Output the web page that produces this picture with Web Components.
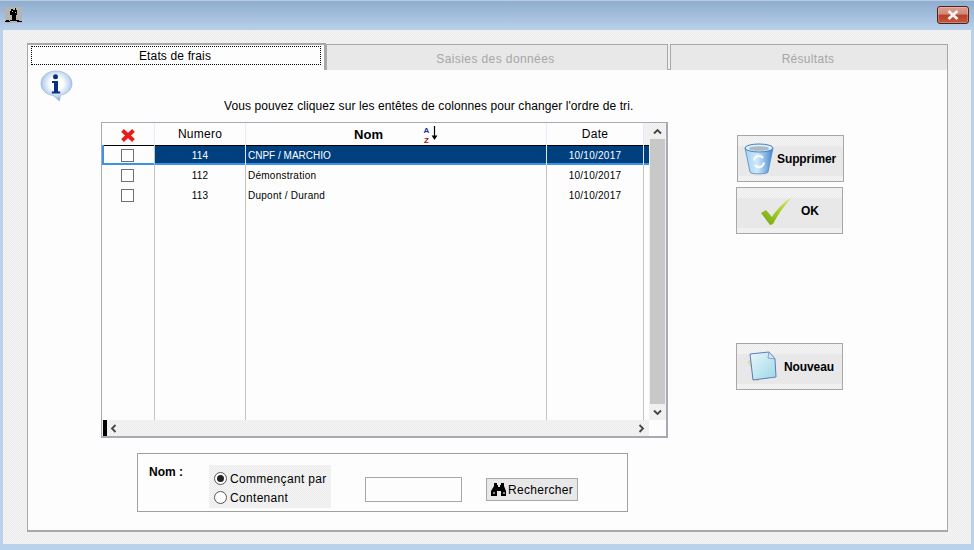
<!DOCTYPE html>
<html lang="fr">
<head>
<meta charset="utf-8">
<title>Etats de frais</title>
<style>
  html, body { margin: 0; padding: 0; height: 100%; overflow: hidden; }
  body { font-family: "Liberation Sans", Arial, sans-serif; font-size: 12px; color: #000; }
</style>
</head>
<body>

<app-window>
  <tab-panel>
    <panel-hint>Vous pouvez cliquez sur les entêtes de colonnes pour changer l'ordre de tri.</panel-hint>
    <div style="display:flex; margin-left:73px;">
      <data-list>
        <list-row selected num="114" name="CNPF / MARCHIO" date="10/10/2017"></list-row>
        <list-row num="112" name="Démonstration" date="10/10/2017"></list-row>
        <list-row num="113" name="Dupont / Durand" date="10/10/2017"></list-row>
      </data-list>
      <div style="display:flex; flex-direction:column; margin-left:68px; padding-top:13px;">
        <img-button icon="trash" style="margin-left:1px;" label="Supprimer" gap="3"></img-button>
        <img-button icon="check" style="margin-top:5px;" label="OK" gap="9" pad="24"></img-button>
        <img-button icon="doc" style="margin-top:109px;" label="Nouveau" gap="7" pad="11"></img-button>
      </div>
    </div>
    <search-box></search-box>
  </tab-panel>
</app-window>

<script>
const DITHER = 'repeating-conic-gradient(#f5f5f5 0 25%, #ebebeb 0 50%) 0 0 / 2px 2px';

class AppWindow extends HTMLElement {
  constructor() {
    super();
    this.attachShadow({ mode: 'open' }).innerHTML = `
      <style>
        :host { display: flex; flex-direction: column; width: 974px; height: 550px; background: #b9d1ea; box-sizing: border-box; }
        .bar { height: 30px; flex: none; display: flex; align-items: center; justify-content: space-between; padding: 0 5px 2px 5px;
               box-sizing: border-box; background: linear-gradient(#8fadcf, #b8d0ea); border-top: 1px solid #b9cbe0; }
        .close { width: 32px; height: 18px; box-sizing: border-box; border: 1px solid #4f1f1c; border-radius: 3px; display: flex; align-items: center; justify-content: center;
                 background: linear-gradient(#dd9c8c 0, #d08877 45%, #b93f26 50%, #c25a3e 100%); box-shadow: inset 0 0 0 1px rgba(255,255,255,.25); }
        .client { flex: none; width: 968px; height: 514px; margin-left: 3px; padding: 13px 0 0 24px; box-sizing: border-box; background: ${DITHER}; }
      </style>
      <div class="bar">
        <svg width="17" height="16" viewBox="0 0 17 16">
          <rect width="17" height="16" fill="#b4b4b4"/>
          <path d="M6 2h2v1h2v-2h1v2h1v5h-1v5h3v1H5v-1h2V8H5V4h1zM1 13h3v1h1v1H0v-1h1zM12 14h5v1h-5z" fill="#000"/>
          <path d="M7 4h1v1H7zM10 5h1v1h-1z" fill="#bbb"/>
        </svg>
        <div class="close">
          <svg width="14" height="10" viewBox="0 0 14 10"><path d="M2.500 1 11.500 9M11.500 1 2.500 9" stroke="#f2f2f2" stroke-width="2.800"/></svg>
        </div>
      </div>
      <div class="client"><slot></slot></div>`;
  }
}

class TabPanel extends HTMLElement {
  constructor() {
    super();
    this.attachShadow({ mode: 'open' }).innerHTML = `
      <style>
        :host { display: block; width: 921px; height: 489px; }
        .tabs { display: grid; grid-template-columns: 299px 342px 280px; height: 26px; }
        .tab { box-sizing: border-box; display: flex; align-items: center; justify-content: center; }
        .on { border: 1px solid #a8a8a8; border-bottom: 0; border-width: 2px 2px 0 1px; background: #fdfdfd; padding: 1px 3px 5px 3px; position: relative; z-index: 1; height: 27px; }
        .on span { flex: 1; height: 100%; display: flex; align-items: center; justify-content: center; border: 1px dotted #000; font-size: 12px; letter-spacing: .15px; padding-right: 2px; box-sizing: border-box; }
        .off { margin-top: 1px; border: 1px solid #a8a8a8; border-bottom: 0; background: #e8e8e8; color: #a6a6a6; padding-top: 2px; }
        .off.b { margin-left: 0; letter-spacing: .4px; padding-right: 3px; }
        .off.c { margin-left: 2px; letter-spacing: .3px; padding-right: 2px; }
        .body { box-sizing: border-box; height: 463px; border: 1px solid #a8a8a8; border-width: 1px 1px 2px 1px; background: #fdfdfd; }
      </style>
      <div class="tabs">
        <div class="tab on"><span>Etats de frais</span></div>
        <div class="tab off b">Saisies des données</div>
        <div class="tab off c">Résultats</div>
      </div>
      <div class="body"><slot></slot></div>`;
  }
}

class PanelHint extends HTMLElement {
  constructor() {
    super();
    this.attachShadow({ mode: 'open' }).innerHTML = `
      <style>
        :host { display: flex; height: 52px; }
        svg { margin: 0 0 0 12px; flex: none; }
        .t { margin: 28px 0 0 151px; white-space: nowrap; font-size: 12px; line-height: 16px; letter-spacing: .09px; }
      </style>
      <svg width="33" height="32" viewBox="0 0 33 32">
        <defs>
          <radialGradient id="bub" cx=".5" cy=".42" r=".62">
            <stop offset=".35" stop-color="#fdfeff"/><stop offset=".72" stop-color="#bcd3ef"/><stop offset="1" stop-color="#5f88c4"/>
          </radialGradient>
        </defs>
        <path d="M16 1C7 1 1 6.500 1 13.500 1 20 6 24.500 13 25.400L19.500 31 20.500 25.200C27 24 32 19.800 32 13.500 32 6.500 25 1 16 1Z" fill="url(#bub)" stroke="#9db7d8" stroke-width=".7"/>
        <circle cx="15.500" cy="6.800" r="2.500" fill="#0c2f86"/>
        <path d="M12 11h6v10.500h2.200v2h-8.400v-2H14v-8.500h-2z" fill="#0c2f86"/>
      </svg>
      <div class="t"><slot></slot></div>`;
  }
}

const COLS = 'grid-template-columns: 53px 91px 301px 97px 5px;';

class DataList extends HTMLElement {
  constructor() {
    super();
    this.attachShadow({ mode: 'open' }).innerHTML = `
      <style>
        :host { display: block; box-sizing: border-box; width: 567px; height: 316px; border: 1px solid #a9a9b3; border-width: 1px 2px 2px 1px; background: #fdfdfd; }
        .wrap { display: grid; grid-template-columns: 547px 17px; grid-template-rows: 297px 16px; height: 100%; }
        .main { display: flex; flex-direction: column; min-width: 0; }
        .head { display: grid; ${COLS} height: 22px; flex: none; font-size: 12px; letter-spacing: .25px; }
        .head > div { border-right: 1px solid #e4eef8; display: flex; align-items: center; justify-content: center; box-sizing: border-box; }
        .head .x { border-right: 0; background: ${DITHER}; }
        .head svg.del { margin-top: 2px; }
        .nom { font-weight: bold; font-size: 13px; position: relative; padding-right: 55px; letter-spacing: 0; }
        .az { position: absolute; left: 176px; top: 3px; width: 17px; height: 16px; display: flex; }
        .az b { display: flex; flex-direction: column; font: bold 8px/9.500px "Liberation Sans", sans-serif; width: 9px; text-align: center; }
        .az i { color: #1a2aa8; font-style: normal; }
        .az u { color: #9c1010; text-decoration: none; }
        .fill { flex: 1; display: grid; ${COLS} }
        .fill div { border-right: 1px solid #c9c3bb; }
        .fill div:last-child { border: 0; }
        .vs { display: flex; flex-direction: column; background: ${DITHER}; }
        .vs .arr { height: 16px; flex: none; display: flex; align-items: center; justify-content: center; }
        .vs .thumb { flex: 1; background: #c8c8c8; margin: 0 1px 0 1px; }
        .hs { display: flex; align-items: center; justify-content: space-between; background: ${DITHER}; padding: 0 4px 0 0; }
        .mark { width: 4px; height: 16px; background: #000; margin-left: 1px; }
        .hs svg:first-of-type { margin-left: 3px; margin-right: auto; }
      </style>
      <div class="wrap">
        <div class="main">
          <div class="head">
            <div>
              <svg class="del" width="16" height="15" viewBox="0 0 16 15"><path d="M2.500 2.500 13.500 12.500M13.500 2.500 2.500 12.500" stroke="#ea1c18" stroke-width="4"/></svg>
            </div>
            <div>Numero</div>
            <div class="nom">Nom
              <span class="az"><b><i>A</i><u>Z</u></b>
                <svg width="7" height="15" viewBox="0 0 7 15"><path d="M3.500 0v11" stroke="#000" stroke-width="1.200"/><path d="M.6 9.500h5.800L3.500 14z" fill="#000"/></svg>
              </span>
            </div>
            <div>Date</div>
            <div class="x" style="border:0"></div>
          </div>
          <slot></slot>
          <div class="fill"><div></div><div></div><div></div><div></div><div></div></div>
        </div>
        <div class="vs">
          <div class="arr"><svg width="9" height="7" viewBox="0 0 9 7"><path d="M1 5.500 4.500 2 8 5.500" fill="none" stroke="#444" stroke-width="1.800"/></svg></div>
          <div class="thumb"></div>
          <div class="arr"><svg width="9" height="7" viewBox="0 0 9 7"><path d="M1 1.500 4.500 5 8 1.500" fill="none" stroke="#444" stroke-width="1.800"/></svg></div>
        </div>
        <div class="hs">
          <span class="mark"></span>
          <svg width="7" height="9" viewBox="0 0 7 9"><path d="M5.500 1 2 4.500 5.500 8" fill="none" stroke="#444" stroke-width="1.800"/></svg>
          <svg width="7" height="9" viewBox="0 0 7 9"><path d="M1.500 1 5 4.500 1.500 8" fill="none" stroke="#444" stroke-width="1.800"/></svg>
        </div>
      </div>`;
  }
}

class ListRow extends HTMLElement {
  constructor() {
    super();
    this.attachShadow({ mode: 'open' });
  }
  connectedCallback() {
    this.shadowRoot.innerHTML = `
      <style>
        :host { display: grid; ${COLS} height: 20px; font-size: 10px; letter-spacing: .25px; box-sizing: border-box; }
        :host([selected]) { color: #fff; background: #00407f; box-shadow: inset 0 1px #000, inset 0 -2px #3a93e6; }
        div { display: flex; align-items: center; border-right: 1px solid #c9c3bb; box-sizing: border-box; min-width: 0; white-space: nowrap; }
        :host([selected]) div { border-right-color: #dfe6ee; }
        :host([selected]) .n { letter-spacing: 0; }
        .c { justify-content: center; }
        .n { padding-left: 2px; }
        .box { background: #fdfdfd; padding-right: 2px; }
        :host([selected]) .box { box-shadow: inset 2px 0 #3a93e6, inset 0 1px #000, inset 0 -2px #3a93e6; border-right-color: #c9c3bb; }
        i { display: block; width: 13px; height: 13px; box-sizing: border-box; border: 1px solid #707070; background: #fff; }
        .end { border: 0 !important; }
      </style>
      <div class="c box"><i></i></div>
      <div class="c">${this.getAttribute('num')}</div>
      <div class="n">${this.getAttribute('name')}</div>
      <div class="c">${this.getAttribute('date')}</div>
      <div class="end"></div>`;
  }
}

const ICONS = {
  trash: `<svg width="30" height="32" viewBox="0 0 30 32">
      <defs><linearGradient id="tr" x1="0" x2="1"><stop offset="0" stop-color="#a6d2f2"/><stop offset=".45" stop-color="#cfe8f9"/><stop offset="1" stop-color="#3f85d0"/></linearGradient></defs>
      <path d="M1 5 6 29C6 31.500 24 31.500 24 29L29 5Z" fill="url(#tr)" stroke="#4f86c4" stroke-width=".8"/>
      <ellipse cx="15" cy="5" rx="14" ry="4" fill="#e6eef3" stroke="#3f7ec0"/>
      <ellipse cx="15" cy="5.500" rx="10" ry="2.300" fill="#a8bac8"/>
      <path d="M10 17.500a5 5 0 0 1 9-2.500M20 19.500a5 5 0 0 1-9 2.500" fill="none" stroke="#f4faff" stroke-width="2.200"/>
    </svg>`,
  check: `<svg width="31" height="28" viewBox="0 0 31 28">
      <defs><linearGradient id="ck" x1="0" y1="1" x2="1" y2="0"><stop offset="0" stop-color="#6fa010"/><stop offset=".55" stop-color="#a8d02a"/><stop offset="1" stop-color="#d8ee80"/></linearGradient></defs>
      <path d="M0 16 5 13 11 20C16 12 23 5 31 0 24 8 17 17 12 27L9 28Z" fill="url(#ck)"/>
    </svg>`,
  doc: `<svg width="29" height="31" viewBox="0 0 29 31">
      <defs><linearGradient id="dc" x1="0" y1="0" x2="1" y2="1"><stop offset="0" stop-color="#eaf7fb"/><stop offset="1" stop-color="#9cd8e6"/></linearGradient></defs>
      <path d="M0 11 3 9 5 27 10 30 11 27Z" fill="#f0e2a0" stroke="#c9b770" stroke-width=".5"/>
      <path d="M2 3 21 1 27 8 28 26 5 29Z" fill="url(#dc)" stroke="#5c7cb8" stroke-width="1"/>
      <path d="M21 1 20 7 27 8Z" fill="#dfe9f6" stroke="#6d8cc4" stroke-width=".8"/>
    </svg>`
};

class ImgButton extends HTMLElement {
  constructor() {
    super();
    this.attachShadow({ mode: 'open' });
  }
  connectedCallback() {
    const gap = this.getAttribute('gap') || 4;
    const pad = this.getAttribute('pad') || 6;
    this.shadowRoot.innerHTML = `
      <style>
        :host { display: flex; align-items: center; box-sizing: border-box; width: 107px; height: 47px; border: 1px solid #a8a8a8;
                padding-left: ${pad}px; font-weight: bold; font-size: 12px; letter-spacing: -.1px; }
        span { margin-left: ${gap}px; white-space: nowrap; }
        svg { flex: none; }
      </style>
      ${ICONS[this.getAttribute('icon')]}<span>${this.getAttribute('label')}</span>`;
    this.style.background = 'linear-gradient(#e8e8e8,#e8e8e8) 0 10px / 100% 30px no-repeat, ' + DITHER;
  }
}

class SearchBox extends HTMLElement {
  constructor() {
    super();
    this.attachShadow({ mode: 'open' }).innerHTML = `
      <style>
        :host { display: flex; box-sizing: border-box; width: 491px; height: 59px; margin: 15px 0 0 109px; border: 1px solid #a0a0a0; padding: 11px 0 0 11px; }
        .lab { font-weight: bold; font-size: 12px; width: 60px; flex: none; line-height: 15px; }
        .grp { width: 122px; height: 43px; flex: none; background: ${DITHER}; padding: 4px 0 0 5px; box-sizing: border-box; font-size: 12px; }
        label { display: flex; align-items: center; height: 19px; white-space: nowrap; letter-spacing: .32px; }
        .r { width: 13px; height: 13px; box-sizing: border-box; border: 1px solid #555; border-radius: 50%; background: #fff; margin-right: 3px; display: flex; align-items: center; justify-content: center; flex: none; }
        .r i { width: 7px; height: 7px; border-radius: 50%; background: #222; }
        .inp { width: 97px; height: 25px; box-sizing: border-box; border: 1px solid #a8a8a8; background: #fdfdfd; margin: 12px 0 0 34px; flex: none; }
        .btn { width: 92px; height: 23px; box-sizing: border-box; border: 1px solid #a8a8a8; background: #e8e8e8; margin: 13px 0 0 24px; display: flex; align-items: center; padding-left: 4px; letter-spacing: .3px; }
        .btn svg { margin-right: 1px; flex: none; }
      </style>
      <div class="lab">Nom :</div>
      <div class="grp">
        <label><span class="r"><i></i></span>Commençant par</label>
        <label><span class="r"></span>Contenant</label>
      </div>
      <div class="inp"></div>
      <div class="btn">
        <svg width="16" height="13" viewBox="0 0 16 13"><path d="M3 0h3v2h1v2h2V2h1V0h3v3l2 5v5H10V8H6v5H0V8l3-5z" fill="#000"/><path d="M2 9h2v2H2zM12 9h2v2h-2z" fill="#888"/></svg>
        Rechercher
      </div>`;
  }
}

customElements.define('app-window', AppWindow);
customElements.define('tab-panel', TabPanel);
customElements.define('panel-hint', PanelHint);
customElements.define('data-list', DataList);
customElements.define('list-row', ListRow);
customElements.define('img-button', ImgButton);
customElements.define('search-box', SearchBox);
</script>
</body>
</html>
